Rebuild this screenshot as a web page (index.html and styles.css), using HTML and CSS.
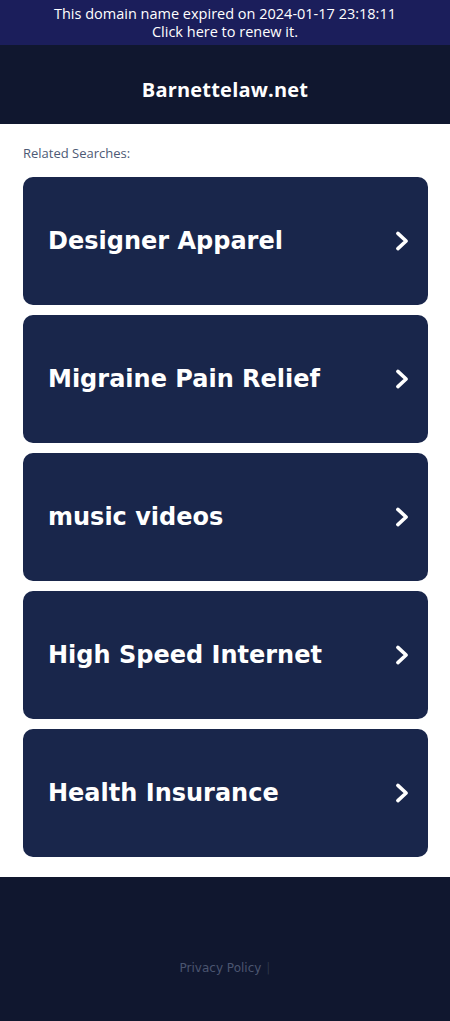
FILE: index.html
```html
<!DOCTYPE html>
<html lang="en">
<head>
    <meta charset="UTF-8">
    <meta name="viewport" content="width=device-width, initial-scale=1.0">
    <title>Barnettelaw.net</title>
    <link rel="stylesheet" href="styles.css">
</head>
<body>

    <div class="expired-banner">
        <a href="#">This domain name expired on 2024-01-17 23:18:11<br>Click here to renew it.</a>
    </div>

    <div class="header">
        <h1>Barnettelaw.net</h1>
    </div>

    <div class="content">
        <p class="related-title">Related Searches:</p>

        <div class="link-list">
            <a class="search-link" href="#">
                <span>Designer Apparel</span>
                <svg class="chevron" viewBox="0 0 16 16"><path d="M5 2.5 L11 8 L5 13.5"/></svg>
            </a>
            <a class="search-link" href="#">
                <span>Migraine Pain Relief</span>
                <svg class="chevron" viewBox="0 0 16 16"><path d="M5 2.5 L11 8 L5 13.5"/></svg>
            </a>
            <a class="search-link" href="#">
                <span>music videos</span>
                <svg class="chevron" viewBox="0 0 16 16"><path d="M5 2.5 L11 8 L5 13.5"/></svg>
            </a>
            <a class="search-link" href="#">
                <span>High Speed Internet</span>
                <svg class="chevron" viewBox="0 0 16 16"><path d="M5 2.5 L11 8 L5 13.5"/></svg>
            </a>
            <a class="search-link" href="#">
                <span>Health Insurance</span>
                <svg class="chevron" viewBox="0 0 16 16"><path d="M5 2.5 L11 8 L5 13.5"/></svg>
            </a>
        </div>
    </div>

    <div class="footer">
        <a href="#">Privacy Policy</a><span class="sep">|</span>
    </div>

</body>
</html>
```

FILE: styles.css
```css
body {
    margin: 0;
    padding: 0;
    background-color: #ffffff;
    font-family: "DejaVu Sans", sans-serif;
}

a {
    text-decoration: none;
}

.expired-banner {
    background-color: #1b1e5b;
    height: 45px;
    display: flex;
    align-items: center;
    justify-content: center;
    text-align: center;
}

.expired-banner a {
    color: #ffffff;
    font-family: "Open Sans", sans-serif;
    font-size: 14.5px;
    font-weight: 500;
    line-height: 18px;
}

.header {
    background-color: #10172f;
    height: 79px;
    box-sizing: border-box;
    padding-top: 10px;
    display: flex;
    align-items: center;
    justify-content: center;
}

.header h1 {
    margin: 0;
    color: #ffffff;
    font-family: "Open Sans", sans-serif;
    font-size: 20px;
    font-weight: 700;
    letter-spacing: 0.2px;
}

.content {
    padding: 21px 22px 20px 23px;
}

.related-title {
    margin: 0 0 16px 0;
    color: #4d5a75;
    font-family: "Open Sans", sans-serif;
    font-size: 13px;
    line-height: 16px;
}

.link-list {
    display: flex;
    flex-direction: column;
    gap: 10px;
}

.search-link {
    background-color: #19264b;
    border-radius: 10px;
    height: 128px;
    display: flex;
    align-items: center;
    justify-content: space-between;
    padding: 0 15px 0 25px;
    color: #ffffff;
    font-size: 24px;
    font-weight: 700;
}

.chevron {
    width: 22px;
    height: 22px;
    fill: none;
    stroke: #ffffff;
    stroke-width: 2.6;
    stroke-linecap: round;
    stroke-linejoin: round;
}

.footer {
    background-color: #10172f;
    height: 145px;
    box-sizing: border-box;
    padding-top: 36px;
    display: flex;
    align-items: center;
    justify-content: center;
    font-size: 12px;
}

.footer a {
    color: #4b5570;
}

.footer .sep {
    color: #2c3447;
    margin-left: 5px;
}
```
